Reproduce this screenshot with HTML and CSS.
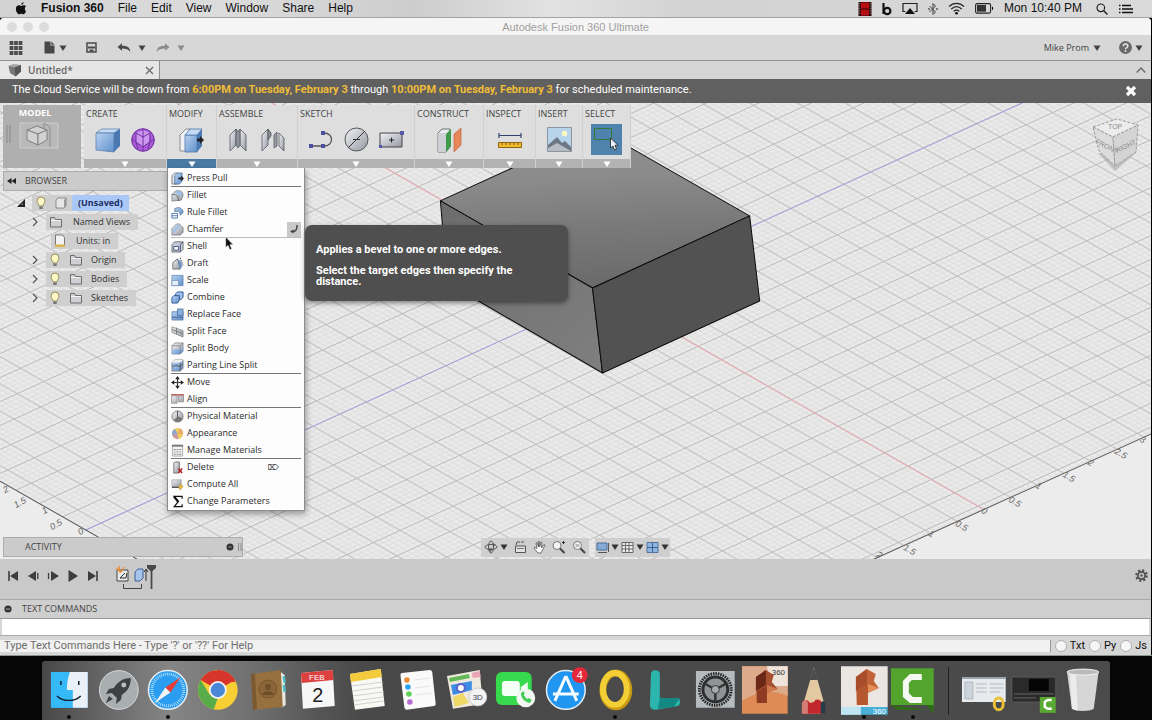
FILE: index.html
```html
<!DOCTYPE html>
<html lang="en">
<head>
<meta charset="utf-8">
<title>Autodesk Fusion 360 Ultimate</title>
<link rel="stylesheet" href="styles.css">
</head>
<body>
<svg class="defs" aria-hidden="true">
  <defs>
    <linearGradient id="blue" x1="0" y1="0" x2="1" y2="1"><stop offset="0" stop-color="#b9d3f2"/><stop offset="1" stop-color="#5f8fca"/></linearGradient>
    <linearGradient id="steel" x1="0" y1="0" x2="1" y2="1"><stop offset="0" stop-color="#f2f3f6"/><stop offset="1" stop-color="#9498a2"/></linearGradient>
    <symbol id="caret" viewBox="0 0 8 6"><path d="M0.5 0.5h7L4 6z" fill="currentColor"/></symbol>
    <symbol id="bulb" viewBox="0 0 12 14"><path d="M6 1a4 4 0 0 0-4 4c0 2 1.7 2.600 2 5h4c.3-2.400 2-3 2-5a4 4 0 0 0-4-4z" fill="#fdf8c4" stroke="#8d8656" stroke-width=".9"/><path d="M4.300 10.500h3.400v2.500H4.300z" fill="#777"/></symbol>
    <symbol id="folder" viewBox="0 0 14 12"><path d="M1.500 11V1.500h4l1 2h6V11z" fill="#cfd0d4" stroke="#6c6c6c"/><path d="M2 4.500h10" stroke="#f5f5f5"/></symbol>
    <symbol id="twig" viewBox="0 0 6 10"><path d="M1 1l4 4-4 4" fill="none" stroke="#555" stroke-width="1.200"/></symbol>
  </defs>
</svg>

<header class="menubar">
  <nav class="menubar-left">
    <button class="menubar-item" aria-label="Apple"><svg width="12" height="13" viewBox="0 0 12 13"><path d="M8.600.2c.1 1.300-1.100 2.600-2.400 2.600C6.100 1.500 7.300.3 8.600.2zM11 9.300c-.5 1.300-1.500 2.900-2.500 2.900-.8 0-1.200-.5-2.200-.5s-1.400.5-2.100.5C2.600 12.200.9 9.400.9 6.900c0-2.300 1.400-3.600 2.900-3.600 1 0 1.700.6 2.500.6.700 0 1.500-.7 2.700-.6.800 0 1.500.4 2 1-1.700 1.100-1.500 3.900 0 5z" fill="#111"/></svg></button>
    <button class="menubar-item strong">Fusion 360</button>
    <button class="menubar-item">File</button>
    <button class="menubar-item">Edit</button>
    <button class="menubar-item">View</button>
    <button class="menubar-item">Window</button>
    <button class="menubar-item">Share</button>
    <button class="menubar-item">Help</button>
  </nav>
  <div class="menubar-right">
    <svg width="14" height="14" viewBox="0 0 14 14"><path d="M.5 0h13v14H.5z" fill="#2a0606"/><path d="M3 .5h8v6H3zM3 7.500h8v6H3z" fill="#b80d14"/><path d="M1.700 1v12M12.300 1v12" stroke="#b99" stroke-width=".8" stroke-dasharray="1.200 1.200"/></svg>
    <svg width="10" height="14" viewBox="0 0 10 14"><path d="M1.500 1v11" stroke="#111" stroke-width="2.200"/><circle cx="5.200" cy="9" r="3.200" fill="none" stroke="#111" stroke-width="2.200"/></svg>
    <svg width="16" height="13" viewBox="0 0 16 13"><path d="M3.500 9.500H1v-8h14v8h-2.500" fill="none" stroke="#222" stroke-width="1.200"/><path d="M8 6l5 6H3z" fill="#111"/></svg>
    <svg width="10" height="14" viewBox="0 0 10 14"><path d="M1.500 4l6 6L5 12.500v-11L7.500 4l-6 6" fill="none" stroke="#444"/><circle cx="1" cy="7" r=".8"/><circle cx="9" cy="7" r=".8"/></svg>
    <svg width="17" height="13" viewBox="0 0 17 13"><path d="M1 4.500c4.500-4.300 10.500-4.300 15 0M3.300 7c3.200-3 7.200-3 10.400 0M5.700 9.300c1.800-1.600 3.800-1.600 5.600 0" fill="none" stroke="#222" stroke-width="1.200"/><circle cx="8.500" cy="11.300" r="1.300"/></svg>
    <svg width="19" height="11" viewBox="0 0 19 11"><rect x=".6" y=".6" width="15" height="9.500" rx="1.500" fill="none" stroke="#222" stroke-width="1.100"/><path d="M2 2h9v6.700H2z" fill="#333"/><path d="M17 3.500c1.600.6 1.600 3.200 0 3.800z"/></svg>
    <span class="clock">Mon 10:40 PM</span>
    <button class="menubar-item" aria-label="Search"><svg width="12" height="12" viewBox="0 0 12 12"><circle cx="4.800" cy="4.800" r="3.800" fill="none" stroke="#222" stroke-width="1.200"/><path d="M7.500 7.500L11.500 11.500" stroke="#222" stroke-width="1.500"/></svg></button>
    <button class="menubar-item" aria-label="Notifications"><svg width="16" height="10" viewBox="0 0 16 10"><path d="M4 1.500h9M4 5h11M4 8.500h11" stroke="#111" stroke-width="1.500"/><path d="M1 1.500h1.500M1 5h1.500M1 8.500h1.500" stroke="#111" stroke-width="1.500"/></svg></button>
  </div>
</header>

<main class="window">
  <div class="titlebar">
    <div class="lights"><span class="light"></span><span class="light"></span><span class="light"></span></div>
    <h1 class="title">Autodesk Fusion 360 Ultimate</h1>
  </div>

  <div class="quickbar">
    <div class="quick-left">
      <button class="tool" aria-label="Data panel"><svg width="14" height="14" viewBox="0 0 14 14"><path d="M2.500 0v14M7 0v14M11.500 0v14" stroke="#4d4d4d" stroke-width="3.800" stroke-dasharray="3.900 1.150"/></svg></button>
      <button class="tool file" aria-label="File"><svg width="11" height="13" viewBox="0 0 11 13"><path d="M.5.5h6v4h4v8H.5z" fill="#484848"/><path d="M7.300.5l3.200 3.200H7.300z" fill="#484848"/></svg><svg class="caret" width="8" height="6"><use href="#caret"/></svg></button>
      <button class="tool save" aria-label="Save"><svg width="11" height="11" viewBox="0 0 11 11"><path d="M1 1h9v9H1z" fill="none" stroke="#4a4a4a" stroke-width="1.500"/><path d="M2 5.500h7M3.500 8.500h4" stroke="#4a4a4a" stroke-width="2"/></svg></button>
      <button class="tool" aria-label="Undo"><svg width="14" height="10" viewBox="0 0 14 10"><path d="M.5 4L5 .3v2.400c5 0 8 1.300 8.300 6.300C11.500 6.200 9 5.500 5 5.500v2.300z" fill="#4a4a4a"/></svg><svg class="caret" width="8" height="6"><use href="#caret"/></svg></button>
      <button class="tool faded" aria-label="Redo"><svg width="14" height="10" viewBox="0 0 14 10"><path d="M13.500 4L9 .3v2.400C4 2.700 1 4 .7 9 2.500 6.200 5 5.500 9 5.500v2.300z" fill="#8b8b8b"/></svg><svg class="caret" width="8" height="6"><use href="#caret"/></svg></button>
    </div>
    <div class="quick-right">
      <button class="tool user">Mike Prom <svg width="8" height="6"><use href="#caret"/></svg></button>
      <button class="tool help" aria-label="Help"><svg width="13" height="13" viewBox="0 0 13 13"><circle cx="6.500" cy="6.500" r="6.500" fill="#6a6a6a"/><path d="M4.300 5.200c0-3 4.500-2.800 4.500-.2 0 1.700-2.200 1.500-2.200 3.200" fill="none" stroke="#e5e5e5" stroke-width="1.500"/><circle cx="6.500" cy="10" r=".9" fill="#e5e5e5"/></svg><svg width="8" height="6"><use href="#caret"/></svg></button>
    </div>
  </div>

  <div class="tabs">
    <div class="tab">
      <svg width="14" height="13" viewBox="0 0 14 13"><path d="M.5 2L5 .5 13 1v6.500L7.500 12.500 2 9z" fill="#777"/><path d="M.5 2l6 1.500 6.500-2.500L5 .5z" fill="#a5a5a5"/><path d="M6.500 3.500l1 9L13 7.500V1z" fill="#555"/></svg>
      <span class="tab-name">Untitled*</span>
      <button class="tool" aria-label="Close tab"><svg width="9" height="9" viewBox="0 0 9 9"><path d="M1 1l7 7M8 1L1 8" stroke="#6a6a6a" stroke-width="1.300"/></svg></button>
    </div>
    <button class="tool collapse" aria-label="Collapse"><svg width="10" height="6" viewBox="0 0 10 6"><path d="M.7 5.500L5 1l4.300 4.500" fill="none" stroke="#666" stroke-width="1.300"/></svg></button>
  </div>

  <div class="banner">
    <p class="banner-text">The Cloud Service will be down from <b>6:00PM on Tuesday, February 3</b> through <b>10:00PM on Tuesday, February 3</b> for scheduled maintenance.</p>
    <button class="tool" aria-label="Dismiss"><svg width="12" height="12" viewBox="0 0 12 12"><path d="M2 2l8 8M10 2l-8 8" stroke="#fff" stroke-width="3.200"/></svg></button>
  </div>

  <section class="canvas">
    <svg class="scene" viewBox="0 103 1150 456" preserveAspectRatio="xMidYMid slice" aria-hidden="true">
      <defs>
        <pattern id="minor" width="10" height="10" patternUnits="userSpaceOnUse" patternTransform="matrix(.53 -.242 .466 .266 599.5 293)"><path d="M0 5h10M5 0v10" stroke="#dcdcdc" stroke-width="1.800"/></pattern>
        <pattern id="major" width="50" height="50" patternUnits="userSpaceOnUse" patternTransform="matrix(.53 -.242 .466 .266 579.6 292.5)"><path d="M0 25h50M25 0v50" stroke="#b9b9b9" stroke-width="1.700"/></pattern>
        <linearGradient id="topface" x1=".5" y1="0" x2=".6" y2="1"><stop offset="0" stop-color="#8e8e8e"/><stop offset=".3" stop-color="#8b8b8b"/><stop offset=".6" stop-color="#7a7a7a"/><stop offset="1" stop-color="#696969"/></linearGradient>
        <linearGradient id="leftface" x1="0" y1="0" x2="1" y2="1"><stop offset="0" stop-color="#6c6c6c"/><stop offset="1" stop-color="#7f7f7f"/></linearGradient>
      </defs>
      <path d="M0 103h1150v456H0z" fill="#ececec"/>
      <path d="M0 103h1150v330L873 559H137L0 481z" fill="#eaeaea"/>
      <path d="M0 103h1150v330L873 559H137L0 481z" fill="url(#minor)"/>
      <path d="M0 103h1150v330L873 559H137L0 481z" fill="url(#major)"/>
      <path d="M85 530L1022 103" stroke="#a3a3e4"/>
      <path d="M271 103L982 509" stroke="#eeaab2"/>
      <path d="M0 481l137 78M873 559l279-126" stroke="#555"/>
      <g class="axis">
        <text transform="translate(80 535) rotate(-30)">0</text>
        <text transform="translate(52 530) rotate(-30)">0.5</text>
        <text transform="translate(44 514) rotate(-30)">1</text>
        <text transform="translate(16 508) rotate(-30)">1.5</text>
        <text transform="translate(5 493) rotate(-30)">2</text>
        <text transform="translate(875 556) rotate(30)">2</text>
        <text transform="translate(902 549) rotate(30)">1.5</text>
        <text transform="translate(927 535) rotate(30)">1</text>
        <text transform="translate(954 525) rotate(30)">0.5</text>
        <text transform="translate(980 512) rotate(30)">0</text>
        <text transform="translate(1007 501) rotate(30)">0.5</text>
        <text transform="translate(1034 487) rotate(30)">1</text>
        <text transform="translate(1061 476) rotate(30)">1.5</text>
        <text transform="translate(1086 464) rotate(30)">2</text>
        <text transform="translate(1113 453) rotate(30)">2.5</text>
        <text transform="translate(1138 441) rotate(30)">3</text>
      </g>
      <g stroke="#0c0c0c" stroke-linejoin="round">
        <path d="M440 201L597 129l152 87-157 72z" fill="url(#topface)"/>
        <path d="M440 201l152 87 10 85-155-90z" fill="url(#leftface)"/>
        <path d="M592 288l157-72 10 85-157 72z" fill="#525252"/>
      </g>
    </svg>

    <svg class="viewcube" width="52" height="56" viewBox="0 0 52 56" role="img" aria-label="View cube">
      <path d="M8 37l17 18 22-19z" fill="#a5a5a5" opacity=".6"/>
      <g stroke="#9c9c9c" stroke-dasharray="3 1.500">
        <path d="M3 11L27 3l21 6-25 12z" fill="#ececec"/>
        <path d="M3 11l20 10 2 29L9 35z" fill="#dcdcdc"/>
        <path d="M23 21L48 9l-2 27-21 14z" fill="#d4d4d4"/>
      </g>
      <text class="cube-text" transform="translate(5 27) rotate(27)">FRONT</text>
      <text class="cube-text" transform="translate(27 37) rotate(-25)">RIGHT</text>
      <text class="cube-text" transform="translate(18 13)">TOP</text>
    </svg>

    <div class="ribbon">
      <button class="workspace">
        <span class="workspace-name">MODEL</span>
        <svg width="60" height="28" viewBox="0 0 60 28"><path d="M2 4v18M5 4v18" stroke="#8a8a8a"/><path d="M15 2h38v25H15z" fill="#b9b9b9" stroke="#cdcdcd"/><path d="M39 2l6 4v20M39 2v8" stroke="#8d8d8d" fill="none"/><g fill="#d2d2d2" stroke="#808080"><path d="M22 9l10-4 10 4-9 4z"/><path d="M22 9l11 4v11l-11-5z"/><path d="M33 13l9-4v10l-9 5z"/></g></svg>
      </button>

      <section class="group g-create">
        <h2 class="group-name">CREATE</h2>
        <div class="group-icons">
          <button class="tool" aria-label="Box"><svg width="26" height="26" viewBox="0 0 26 26"><path d="M1 6l6-4 18 0-6 4z" fill="#c5dcf5" stroke="#5377a5" stroke-width=".7"/><path d="M1 6h18v19L1 23z" fill="url(#blue)" stroke="#5377a5" stroke-width=".7"/><path d="M19 6l6-4v17l-6 6z" fill="#4c78b2"/></svg></button>
          <button class="tool" aria-label="Form"><svg width="24" height="24" viewBox="0 0 24 24"><circle cx="12" cy="12" r="11.300" fill="#a95bd8" stroke="#6b2d9c"/><path d="M5 5l7-3 7 3-1 9-6 5-7-5z" fill="#cd97f0"/><path d="M5 5l7 4 7-4M12 9v14M1 11l4 3 7 5 7-5 4-3M5 5v9l2 7M19 5v9l-2 7M12 1v8" fill="none" stroke="#71319f"/></svg></button>
        </div>
        <button class="drop" aria-label="Create menu"><svg width="8" height="6"><use href="#caret"/></svg></button>
      </section>

      <section class="group g-modify">
        <h2 class="group-name">MODIFY</h2>
        <div class="group-icons">
          <button class="tool" aria-label="Press Pull"><svg width="26" height="26" viewBox="0 0 26 26"><path d="M1 8l6-6h5v22H1z" fill="#eef0f3" stroke="#777" stroke-width=".8"/><path d="M6 8h12v17H6z" fill="url(#blue)" stroke="#5279ab" stroke-width=".8"/><path d="M6 8l5-6h12l-5 6z" fill="#c4dbf5" stroke="#5279ab" stroke-width=".8"/><path d="M18 8l5-6v17l-5 6z" fill="#4e7ab4"/><path d="M18 11.500h3V9l4 4-4 4v-2.500h-3z" fill="#222"/></svg></button>
        </div>
        <button class="drop open" aria-label="Modify menu" aria-expanded="true"><svg width="8" height="6"><use href="#caret"/></svg></button>

        <div class="menu" role="menu">
          <button class="menu-item" role="menuitem"><svg viewBox="0 0 14 14"><path d="M1 4l3-3h3v12H1z" fill="#dfe3ea" stroke="#555" stroke-width=".7"/><path d="M4 4l3-3h5v9l-3 3H4z" fill="url(#blue)" stroke="#41608a" stroke-width=".7"/><path d="M8 6h3V4l3 3-3 3V8H8z" fill="#222"/></svg>Press Pull</button>
          <button class="menu-item ruled" role="menuitem"><svg viewBox="0 0 14 14"><path d="M1 13V6l4-4c5-1 8 1 8 5l-2 5z" fill="url(#steel)" stroke="#666" stroke-width=".7"/><path d="M1 6c5-1 7 2 7 7M8 8l5-3" fill="none" stroke="#555" stroke-width=".8"/><path d="M6 2c4 0 6 2 7 4L9 8C8 6 7 5 4 4z" fill="#9fbfe4"/></svg>Fillet</button>
          <button class="menu-item" role="menuitem"><svg viewBox="0 0 14 14"><path d="M4 3c5-3 9 0 9 4l-3 3c0-4-2-5-6-4z" fill="url(#blue)" stroke="#41608a" stroke-width=".7"/><path d="M1 8h6v5H1zM1 10.500h6" fill="#fff" stroke="#3b66a2" stroke-width=".9"/></svg>Rule Fillet</button>
          <button class="menu-item" role="menuitem"><svg viewBox="0 0 14 14"><path d="M1 13V6l5-5h3l4 4v5l-3 3z" fill="url(#steel)" stroke="#666" stroke-width=".7"/><path d="M1 8l6-6.500L10 3 3 11z" fill="#a6c5ea"/></svg>Chamfer<span class="repeat"><svg viewBox="0 0 10 10"><path d="M8 1c.5 5-2 7-5 6.500" fill="none" stroke="#444" stroke-width="1.500"/><path d="M4.500 5.500v4L1 7.500z" fill="#444"/></svg></span></button>
          <button class="menu-item ruled pale" role="menuitem"><svg viewBox="0 0 14 14"><path d="M1 5l3-3h9v8l-3 3H1z" fill="#c6cad8" stroke="#555" stroke-width=".8"/><path d="M3 7h5v4H3zM10 5v8M10 5l3-3" fill="#fff" stroke="#3e4d76"/></svg>Shell</button>
          <button class="menu-item" role="menuitem"><svg viewBox="0 0 14 14"><path d="M2 13V6l5-4 3 11z" fill="url(#steel)" stroke="#555" stroke-width=".8"/><path d="M7 2l4 3 1 5-2 3z" fill="#6c93c4"/><path d="M10 1l3 8" stroke="#333" stroke-dasharray="1.500 1"/></svg>Draft</button>
          <button class="menu-item" role="menuitem"><svg viewBox="0 0 14 14"><path d="M1 1.500h12v11H1z" fill="url(#blue)" stroke="#5379aa" stroke-width=".7"/><path d="M1 7h7v5.500H1z" fill="#e5effb" stroke="#6e8db5" stroke-width=".7"/></svg>Scale</button>
          <button class="menu-item" role="menuitem"><svg viewBox="0 0 14 14"><path d="M5 3l2-2h6v6l-2 2H5z" fill="#9fc0ec" stroke="#2f5795"/><path d="M1 7l2-2h6v5l-2 3H1z" fill="url(#blue)" stroke="#2f5795"/></svg>Combine</button>
          <button class="menu-item" role="menuitem"><svg viewBox="0 0 14 14"><path d="M1 4h12v9H1z" fill="url(#blue)" stroke="#4a6d9d" stroke-width=".7"/><path d="M7 1h6v7H7z" fill="#8ab0df" stroke="#3d5f8e" stroke-width=".7"/><path d="M1 10h12" stroke="#3d5f8e"/></svg>Replace Face</button>
          <button class="menu-item" role="menuitem"><svg viewBox="0 0 14 14"><path d="M1 2l12 4v7L1 8z" fill="url(#steel)" stroke="#777" stroke-width=".7"/><path d="M1 5l12 4M6 3v7" stroke="#777"/></svg>Split Face</button>
          <button class="menu-item" role="menuitem"><svg viewBox="0 0 14 14"><path d="M1 4l3-3h9v9l-3 3H1z" fill="url(#steel)" stroke="#777" stroke-width=".7"/><path d="M1 8h9l3-3v5l-3 3H1z" fill="url(#blue)"/><path d="M1 4h9v9M10 4l3-3" fill="none" stroke="#777" stroke-width=".7"/></svg>Split Body</button>
          <button class="menu-item" role="menuitem"><svg viewBox="0 0 14 14"><path d="M1 4l3-3h9v9l-3 3H1z" fill="url(#blue)" stroke="#666" stroke-width=".7"/><path d="M1 4l3-3h9l-3 3z" fill="#eee"/><path d="M1 8l4-1 5 1 3-3M10 4v9" fill="none" stroke="#555"/></svg>Parting Line Split</button>
          <button class="menu-item ruled" role="menuitem"><svg viewBox="0 0 14 14"><path d="M7 2.500v9M2.500 7h9" stroke="#222" stroke-dasharray="3.500 2"/><path d="M7 0l2.500 3.500h-5zM7 14l2.500-3.500h-5zM0 7l3.500-2.500v5zM14 7l-3.500-2.500v5zM6 6h2v2H6z" fill="#222"/></svg>Move</button>
          <button class="menu-item" role="menuitem"><svg viewBox="0 0 14 14"><path d="M0 2h14" stroke="#c14b43" stroke-width="1.500"/><path d="M.5 3h6v8h-6zM8 3h5.500v6.500H8z" fill="url(#steel)" stroke="#888" stroke-width=".8"/></svg>Align</button>
          <button class="menu-item ruled" role="menuitem"><svg viewBox="0 0 14 14"><circle cx="7" cy="7" r="6" fill="url(#steel)" stroke="#555" stroke-width=".7"/><path d="M7 1v6l5 3" stroke="#555" fill="none"/><path d="M7 7l5 3c-2 3-6 4-9 1z" fill="#777"/></svg>Physical Material</button>
          <button class="menu-item" role="menuitem"><svg viewBox="0 0 14 14"><circle cx="7" cy="7" r="6" fill="#f0cf5a"/><path d="M7 7L4 1.800A6 6 0 0 0 2 10z" fill="#8fa4d0"/><path d="M7 7l6 1A6 6 0 0 0 9 1.300z" fill="#e8ad6a"/><path d="M7 7l-5 3a6 6 0 0 0 6 3z" fill="#d195a5"/></svg>Appearance</button>
          <button class="menu-item" role="menuitem"><svg viewBox="0 0 14 14"><path d="M1.500 1h11v12h-11z" fill="#f4f4f4" stroke="#aaa"/><path d="M1 2h12" stroke="#666" stroke-width="1.500"/><path d="M3 6h8M3 11h8" stroke="#777" stroke-dasharray="2 1"/><path d="M3 8.500h8" stroke="#aaa"/></svg>Manage Materials</button>
          <button class="menu-item ruled" role="menuitem"><svg viewBox="0 0 14 14"><path d="M3 2l2-1h4v11l-2 1H3z" fill="url(#steel)" stroke="#555" stroke-width=".8"/><path d="M8 8l4 5M12 8l-4 5" stroke="#b81d24" stroke-width="1.600"/></svg>Delete<span class="key">⌦</span></button>
          <button class="menu-item" role="menuitem"><svg viewBox="0 0 14 14"><path d="M1 2h10v7H1z" fill="url(#steel)" stroke="#999" stroke-width=".7"/><path d="M1 10h8" stroke="#555" stroke-width="1.500"/><path d="M10 6l3 3-3 4-2-3z" fill="#e4b93d" stroke="#9b8d6a" stroke-width=".6"/></svg>Compute All</button>
          <button class="menu-item" role="menuitem"><svg viewBox="0 0 14 14"><path d="M12 4V1.500H3.500L8 7l-4.500 5.500H12V10" fill="none" stroke="#111" stroke-width="1.300"/><path d="M3 1.500L7.500 7" stroke="#111" stroke-width="2.200"/></svg>Change Parameters</button>

          <div class="tooltip" role="tooltip">
            <p>Applies a bevel to one or more edges.</p>
            <p>Select the target edges then specify the distance.</p>
          </div>
          <svg class="pointer" width="9" height="15" viewBox="0 0 9 15"><path d="M.6.8v10.700l2.400-2 1.800 4.300 2-.9L5 8.800h3.300z" fill="#111" stroke="#fff" stroke-width=".6"/></svg>
        </div>
      </section>

      <section class="group g-assemble">
        <h2 class="group-name">ASSEMBLE</h2>
        <div class="group-icons">
          <button class="tool" aria-label="Joint"><svg width="18" height="24" viewBox="0 0 18 24"><g stroke="#55585e" stroke-width=".8"><path d="M1 7l6-6v16l-6 6z" fill="url(#steel)"/><path d="M17 7l-6-6v16l6 6z" fill="url(#steel)"/><path d="M7 1l2 3 2-3v16l-2 3-2-3z" fill="#8e929b"/></g></svg></button>
          <button class="tool" aria-label="As-built Joint"><svg width="24" height="24" viewBox="0 0 24 24"><g stroke="#55585e" stroke-width=".8"><path d="M1 7l6-6v16l-6 6z" fill="url(#steel)"/><path d="M7 1l3 4v3L7 12z" fill="#858993"/><path d="M23 10l-5-5v13l5 5z" fill="url(#steel)"/><path d="M13 7l3-3v14l-3 2z" fill="#9a9da6"/></g></svg></button>
        </div>
        <button class="drop" aria-label="Assemble menu"><svg width="8" height="6"><use href="#caret"/></svg></button>
      </section>

      <section class="group g-sketch">
        <h2 class="group-name">SKETCH</h2>
        <div class="group-icons">
          <button class="tool" aria-label="Line"><svg width="25" height="24" viewBox="0 0 25 24"><path d="M2 18h13c10 0 10-13 0-13" fill="none" stroke="#555" stroke-width="1.300"/><path d="M0 16h4v4H0zM12 16h4v4h-4zM12 3h4v4h-4z" fill="#4d4fa0"/></svg></button>
          <button class="tool" aria-label="Circle"><svg width="25" height="25" viewBox="0 0 25 25"><circle cx="12.500" cy="12.500" r="11.500" fill="url(#steel)" stroke="#555"/><path d="M4.500 20.500l16-16M9 12.500h7" stroke="#333"/></svg></button>
          <button class="tool" aria-label="Rectangle"><svg width="25" height="24" viewBox="0 0 25 24"><path d="M1 5h22v14H1z" fill="url(#steel)" stroke="#444"/><path d="M10 12h5M12.500 9.500v5" stroke="#222"/><path d="M21 3h4v4h-4zM0 17h3v3H0z" fill="#5557a8"/></svg></button>
        </div>
        <button class="drop" aria-label="Sketch menu"><svg width="8" height="6"><use href="#caret"/></svg></button>
      </section>

      <section class="group g-construct">
        <h2 class="group-name">CONSTRUCT</h2>
        <div class="group-icons">
          <button class="tool" aria-label="Offset Plane"><svg width="26" height="26" viewBox="0 0 26 26"><path d="M2 6l4-4h8v18l-4 5H2z" fill="#e9ebee" stroke="#555" stroke-width=".8"/><path d="M2 6h8v19H2z" fill="#cdd0d5"/><path d="M10 7l5-5v17l-5 6z" fill="#3f9a4a"/><path d="M18 7l7-6v17l-7 7z" fill="#e7875a" stroke="#b95d34" stroke-width=".6"/></svg></button>
        </div>
        <button class="drop" aria-label="Construct menu"><svg width="8" height="6"><use href="#caret"/></svg></button>
      </section>

      <section class="group g-inspect">
        <h2 class="group-name">INSPECT</h2>
        <div class="group-icons">
          <button class="tool" aria-label="Measure"><svg width="24" height="24" viewBox="0 0 24 24"><path d="M1 7.500h22M1 5v5M23 5v5" stroke="#32426a" stroke-width="1.200"/><path d="M.5 14.500h23v5H.5z" fill="#f1b92c" stroke="#8d6410"/><path d="M4 15v2M8 15v2M12 15v2M16 15v2M20 15v2" stroke="#7b580f"/></svg></button>
        </div>
        <button class="drop" aria-label="Inspect menu"><svg width="8" height="6"><use href="#caret"/></svg></button>
      </section>

      <section class="group g-insert">
        <h2 class="group-name">INSERT</h2>
        <div class="group-icons">
          <button class="tool" aria-label="Insert image"><svg width="25" height="25" viewBox="0 0 25 25"><path d="M.5.500h24v24H.5z" fill="#b6d4ea" stroke="#8a97a3"/><circle cx="17.500" cy="6.500" r="2.700" fill="#fdf9c3"/><path d="M1 18l9-8 5 6 3-2 6 6v4H1z" fill="#6c7684"/><path d="M1 24v-3l9-5 14 8z" fill="#b7bcc3"/></svg></button>
        </div>
        <button class="drop" aria-label="Insert menu"><svg width="8" height="6"><use href="#caret"/></svg></button>
      </section>

      <section class="group g-select">
        <h2 class="group-name">SELECT</h2>
        <div class="group-icons">
          <button class="tool" aria-label="Select"><svg width="31" height="31" viewBox="0 0 31 31"><path d="M0 0h31v31H0z" fill="#4f83ae"/><path d="M3.500 4.500h17v11h-17z" fill="none" stroke="#2f7d3a"/><path d="M19.500 14v10l2.500-2 1.500 4 2-.8-1.500-4H27z" fill="#eef3fa" stroke="#222" stroke-width=".8"/></svg></button>
        </div>
        <button class="drop" aria-label="Select menu"><svg width="8" height="6"><use href="#caret"/></svg></button>
      </section>
    </div>

    <aside class="browser">
      <div class="panel-head">
        <svg width="9" height="6" viewBox="0 0 9 6"><path d="M4.500 0v6L0 3zM9 0v6L4.500 3z" fill="#222"/></svg>
        <h2 class="panel-name">BROWSER</h2>
      </div>
      <ul class="tree">
        <li class="node root"><svg class="twig" width="8" height="8" viewBox="0 0 8 8"><path d="M8 0v8H0z" fill="#222"/><path d="M6 4v2H4z" fill="#888"/></svg><span class="chip joined"><svg width="12" height="14"><use href="#bulb"/></svg><svg width="12" height="12" viewBox="0 0 12 12"><path d="M1 3l2-2h8v8l-2 2H1z" fill="#e6e6e6" stroke="#777" stroke-width=".8"/><path d="M9 3l2-2v8l-2 2z" fill="#999"/></svg></span><b class="root-name">(Unsaved)</b></li>
        <li class="node"><svg class="twig" width="6" height="10"><use href="#twig"/></svg><span class="chip views"><svg width="14" height="12"><use href="#folder"/></svg>Named Views</span></li>
        <li class="node"><span class="chip units"><svg width="12" height="14" viewBox="0 0 12 14"><path d="M1.500 1h7l2 2.500V12h-9z" fill="#f3f3f3" stroke="#777"/><path d="M1 10.500h10V13H1z" fill="#d8b54c"/></svg>Units: in</span></li>
        <li class="node"><svg class="twig" width="6" height="10"><use href="#twig"/></svg><span class="chip"><svg width="12" height="14"><use href="#bulb"/></svg><svg width="14" height="12"><use href="#folder"/></svg>Origin</span></li>
        <li class="node"><svg class="twig" width="6" height="10"><use href="#twig"/></svg><span class="chip"><svg width="12" height="14"><use href="#bulb"/></svg><svg width="14" height="12"><use href="#folder"/></svg>Bodies</span></li>
        <li class="node"><svg class="twig" width="6" height="10"><use href="#twig"/></svg><span class="chip"><svg width="12" height="14"><use href="#bulb"/></svg><svg width="14" height="12"><use href="#folder"/></svg>Sketches</span></li>
      </ul>
    </aside>

    <div class="canvas-foot">
      <div class="panel-head activity">
        <h2 class="panel-name">ACTIVITY</h2>
        <svg width="16" height="10" viewBox="0 0 16 10"><circle cx="4" cy="5" r="3.500" fill="#333"/><path d="M2.500 5h3" stroke="#999"/><path d="M12.500 1v8M15 1v8" stroke="#888"/></svg>
      </div>
      <div class="navbar">
        <div class="nav-part">
          <button class="tool" aria-label="Orbit"><svg width="14" height="14" viewBox="0 0 14 14"><ellipse cx="7" cy="7" rx="6" ry="2.500" fill="none" stroke="#555"/><ellipse cx="7" cy="7" rx="2.500" ry="6" fill="none" stroke="#555"/><path d="M4 9l3 3 1-4zM9 3l3 2-3 1z" fill="#555"/></svg><svg width="8" height="6"><use href="#caret"/></svg></button>
          <button class="tool" aria-label="Look At"><svg width="13" height="14" viewBox="0 0 13 14"><path d="M1.500 6h10v6.500h-10z" fill="#e2e2e2" stroke="#555"/><path d="M3 8.500h7" stroke="#777"/><path d="M2 5l1-3h3M7 2h3" stroke="#555" fill="none"/></svg></button>
          <button class="tool" aria-label="Pan"><svg width="13" height="14" viewBox="0 0 13 14"><path d="M4 12L1 8l1-1 2 1.500L3 3l1-.5L5.500 7V1.500h1.200V7L8 2l1 .3L8.500 8 11 4.500l1 .5-2.500 5L8 13H5z" fill="#fff" stroke="#555" stroke-width=".8"/></svg></button>
          <button class="tool" aria-label="Zoom"><svg width="14" height="14" viewBox="0 0 14 14"><circle cx="5" cy="5.500" r="4" fill="#f4f4f4" stroke="#777"/><path d="M8 8.500l4.500 4.500" stroke="#444" stroke-width="2"/><path d="M10 2.500h3M11.500 1v3" stroke="#333"/></svg></button>
          <button class="tool" aria-label="Fit"><svg width="14" height="14" viewBox="0 0 14 14"><circle cx="5.500" cy="5.500" r="4" fill="#f4f4f4" stroke="#777"/><path d="M3.500 4h4v3h-4z" fill="#bbb"/><path d="M8.500 8.500L13 13" stroke="#444" stroke-width="2"/></svg></button>
        </div>
        <div class="nav-part">
          <button class="tool" aria-label="Display Settings"><svg width="13" height="13" viewBox="0 0 13 13"><path d="M1 2h10v7H1z" fill="#84abd8" stroke="#4b6d96"/><path d="M12.500 2v9M2 11.500h9" stroke="#555"/></svg><svg width="8" height="6"><use href="#caret"/></svg></button>
          <button class="tool" aria-label="Grid Settings"><svg width="13" height="13" viewBox="0 0 13 13"><path d="M1 1.500h11v10H1zM1 4.500h11M1 8h11M4.500 1v11M8 1v11" fill="#eee" stroke="#666"/></svg><svg width="8" height="6"><use href="#caret"/></svg></button>
          <button class="tool" aria-label="Viewports"><svg width="13" height="13" viewBox="0 0 13 13"><path d="M1 1.500h11v10H1z" fill="#8db4e2" stroke="#55759c"/><path d="M6.500 1.500v10M1 6.500h11" stroke="#3f6190"/></svg><svg width="8" height="6"><use href="#caret"/></svg></button>
        </div>
      </div>
    </div>
  </section>

  <section class="timeline">
    <div class="playback">
      <button class="tool" aria-label="Start"><svg width="12" height="12" viewBox="0 0 12 12"><path d="M2 1v10" stroke="#3d3d3d" stroke-width="1.600"/><path d="M11 1v10L3 6z" fill="#3d3d3d"/></svg></button>
      <button class="tool" aria-label="Step back"><svg width="12" height="12" viewBox="0 0 12 12"><path d="M9 1v10L1 6z" fill="#3d3d3d"/><path d="M10.800 3v6" stroke="#3d3d3d" stroke-width="1.300"/></svg></button>
      <button class="tool" aria-label="Step forward"><svg width="12" height="12" viewBox="0 0 12 12"><path d="M4 1v10l8-5z" fill="#3d3d3d"/><path d="M1.500 3v6" stroke="#3d3d3d" stroke-width="1.300"/></svg></button>
      <button class="tool" aria-label="Play"><svg width="12" height="12" viewBox="0 0 12 12"><path d="M1.500 0v12L11 6z" fill="#3d3d3d"/></svg></button>
      <button class="tool" aria-label="End"><svg width="12" height="12" viewBox="0 0 12 12"><path d="M10 1v10" stroke="#3d3d3d" stroke-width="1.600"/><path d="M1 1v10l8-5z" fill="#3d3d3d"/></svg></button>
      <svg class="features" width="42" height="28" viewBox="0 0 42 28"><path d="M2 6h11v11H2z" fill="#e9e9e9" stroke="#444"/><path d="M5 14h6l1-5M5 14l5-5" stroke="#333" fill="none"/><path d="M1 4l5 4M4 2l1 7M9 3L6 8" stroke="#f08a2c" stroke-width="1.300"/><path d="M20 8l3-3h5v9l-3 3h-5z" fill="#a7c4ec" stroke="#3c5e97"/><path d="M31 17V6M29 8l2-3 2 3" stroke="#333" fill="none"/><path d="M32 1h9v3l-3.500 3h-2L32 4z" fill="#4a4a4a"/><path d="M36.500 4v21" stroke="#4a4a4a" stroke-width="1.800"/><path d="M8.500 20v4.500h18V20" fill="none" stroke="#444"/></svg>
    </div>
    <button class="tool" aria-label="Settings"><svg width="13" height="13" viewBox="0 0 13 13"><circle cx="6.500" cy="6.500" r="5.200" fill="none" stroke="#505050" stroke-width="2.200" stroke-dasharray="2.050 2.030"/><circle cx="6.500" cy="6.500" r="3.600" fill="none" stroke="#505050" stroke-width="1.800"/><circle cx="6.500" cy="6.500" r="1.200" fill="#505050"/></svg></button>
  </section>

  <section class="commands">
    <div class="commands-head"><svg width="8" height="8" viewBox="0 0 8 8"><circle cx="4" cy="4" r="3.600" fill="#333"/><path d="M2 4h4" stroke="#aaa"/></svg><h2 class="panel-name">TEXT COMMANDS</h2></div>
    <textarea class="output" aria-label="Command output" readonly></textarea>
    <form class="entry">
      <input class="entry-box" type="text" aria-label="Text command" placeholder="Type Text Commands Here - Type '?' or '??' For Help">
      <label class="mode"><input type="radio" name="mode">Txt</label>
      <label class="mode"><input type="radio" name="mode">Py</label>
      <label class="mode"><input type="radio" name="mode">Js</label>
    </form>
  </section>
</main>

<footer class="desktop">
  <nav class="dock">
    <button class="app running" aria-label="Finder"><svg viewBox="0 0 50 54"><path d="M7 11h37v36H7z" fill="#3aa8f0"/><path d="M7 11h19c-2 6-3 11-3 18h6v18H7z" fill="#35b9f7"/><path d="M26 11h18v36H29V29h-6c0-7 1-12 3-18z" fill="#e9f0f8"/><path d="M17 20v4M35 20v4" stroke="#123" stroke-width="1.500"/><path d="M13 35c6 6 18 6 24 0" fill="none" stroke="#123" stroke-width="1.400"/></svg></button>
    <button class="app" aria-label="Launchpad"><svg viewBox="0 0 50 54"><circle cx="25" cy="29" r="19.500" fill="#a9afb0" stroke="#d5d8d8"/><path d="M37 17c-8 0-13 4-17 10l-5 1-3 5 6-1 5 5-1 6 5-4 1-5c6-4 9-9 9-17z" fill="#3d4144"/><circle cx="30" cy="24" r="2.500" fill="#b9bdbd"/><path d="M15 35l-3 7 7-4z" fill="#3d4144"/></svg></button>
    <button class="app running" aria-label="Safari"><svg viewBox="0 0 50 54"><circle cx="25" cy="29" r="19.500" fill="#2a9df0" stroke="#e8eef3" stroke-width="1.500"/><circle cx="25" cy="29" r="16" fill="none" stroke="#bfe3fb" stroke-width="3" stroke-dasharray=".8 1.200"/><path d="M38 16L22.500 26.500l5 5z" fill="#e73c36"/><path d="M12 42l10.500-15.500 5 5z" fill="#f3f3f3"/></svg></button>
    <button class="app" aria-label="Chrome"><svg viewBox="0 0 50 54"><circle cx="25" cy="29" r="20" fill="#f7cf33"/><path d="M25 29L7.700 19a20 20 0 0 1 34.600 0z" fill="#d7352b"/><path d="M25 9a20 20 0 0 1 18 12H25z" fill="#d7352b"/><path d="M7.700 19L17 34l8 3-4 11.500A20 20 0 0 1 7.700 19z" fill="#58ac4a"/><circle cx="25" cy="29" r="9" fill="#f4f4f4"/><circle cx="25" cy="29" r="7.200" fill="#4a87d6"/></svg></button>
    <button class="app" aria-label="Contacts"><svg viewBox="0 0 50 54"><path d="M38 11l4 3 1 30-4 3z" fill="#e9e6dc"/><path d="M41 15l1 7M41 24l1 7" stroke="#4cc0c5" stroke-width="2.500"/><path d="M8 13l30-4 2 37-30 3z" fill="#96703f"/><path d="M8 13l4-.5 2 36-4 .5z" fill="#7b5930"/><circle cx="25" cy="28" r="9" fill="#8a6538" stroke="#75542c"/><circle cx="25" cy="26" r="3" fill="#6e4f29"/><path d="M19 34c1-5 11-5 12 0z" fill="#6e4f29"/></svg></button>
    <button class="app" aria-label="Calendar"><svg viewBox="0 0 50 54"><path d="M9 12l32-3 2 36-32 3z" fill="#f7f7f7"/><path d="M9 12l32-3 .7 10-32 3z" fill="#dc4140"/><text class="cal-month" x="25" y="19">FEB</text><text class="cal-day" x="26" y="41">2</text></svg></button>
    <button class="app" aria-label="Notes"><svg viewBox="0 0 50 54"><path d="M8 13l31-5 4 37-30 4z" fill="#f8f8f5"/><path d="M8 13l31-5 1 8-31 5z" fill="#f3cb3c"/><path d="M10 25l31-4M11 30l30-4M11 35l31-4M12 40l30-4M13 44l29-4" stroke="#d0d0cc"/></svg></button>
    <button class="app" aria-label="Reminders"><svg viewBox="0 0 50 54"><path d="M10 12l28-3q2 0 2.500 2L44 43q0 2-2 2l-27 4q-2 0-2.500-2L8.500 14q0-2 1.500-2z" fill="#fafafa"/><circle cx="15" cy="19" r="2.800" fill="#ee8b33"/><circle cx="16" cy="26" r="2.800" fill="#2ea4ee"/><circle cx="17" cy="33" r="2.800" fill="#5fd05a"/><circle cx="18" cy="41" r="2.800" fill="#b66ad2"/><path d="M22 19l16-2M23 27l16-2M24 34l16-2" stroke="#e3e3e3"/></svg></button>
    <button class="app" aria-label="Maps"><svg viewBox="0 0 50 54"><path d="M6 15l33-6 3 34-30 5z" fill="#eee9dc"/><path d="M8 17l20-4 1 4-20 4z" fill="#63b955"/><path d="M10 24l21-4v9l-19 5z" fill="#3d8ce4"/><path d="M31 12l8-2 1 6-8 1z" fill="#e8a4b4"/><path d="M12 36l10-4 6 10-14 4z" fill="#f0d867"/><circle cx="20" cy="27" r="4" fill="#fff" stroke="#5b62c8" stroke-width="2"/><circle cx="37" cy="36" r="9" fill="#f3f3f3" stroke="#ccc"/><text class="maps-label" x="37" y="39">3D</text></svg></button>
    <button class="app" aria-label="FaceTime"><svg viewBox="0 0 50 54"><rect x="5" y="11" width="36" height="33" rx="6" fill="#36da4c"/><rect x="11" y="20" width="18" height="15" rx="3" fill="#f5fff5"/><path d="M30 26l7-5v13l-7-5z" fill="#f5fff5"/><circle cx="35" cy="37" r="9.500" fill="#f2f6f2"/><path d="M30 33c1 5 4 8 9 9l2-3-3-2-2 1-3-4 1-2-2-2z" fill="#43cc55"/></svg></button>
    <button class="app" aria-label="App Store"><svg viewBox="0 0 50 54"><circle cx="25" cy="29" r="19.500" fill="#2196f0" stroke="#e6edf3" stroke-width="1.500"/><path d="M25 15L14 40M25 15l11 25M12 33h26" stroke="#f5fbff" stroke-width="3" fill="none"/><circle cx="39" cy="14" r="8" fill="#e5293b"/><text class="badge-text" x="39" y="18">4</text></svg></button>
    <button class="app running" aria-label="Outlook"><svg viewBox="0 0 50 54"><ellipse cx="26" cy="29" rx="13" ry="17" fill="none" stroke="#c79a12" stroke-width="7"/><ellipse cx="25" cy="28" rx="12" ry="16" fill="none" stroke="#f3cf35" stroke-width="6"/></svg></button>
    <button class="app" aria-label="Lync"><svg viewBox="0 0 50 54"><path d="M11 13c0-5 9-5 9 0v24h18c3 0 3 8 0 8l-22 4c-4 0-6-2-6-6z" fill="#2bb5ad"/><path d="M20 37h20l-6 9-16 2z" fill="#148983"/></svg></button>
    <button class="app" aria-label="System Preferences"><svg viewBox="0 0 50 54"><path d="M6 10h39v37H6z" fill="#b5babd"/><circle cx="25.500" cy="28.500" r="16" fill="none" stroke="#222" stroke-width="3" stroke-dasharray="1.500 1"/><circle cx="25.500" cy="28.500" r="12.500" fill="#8f9395" stroke="#2d2d2d" stroke-width="3"/><path d="M25.500 28.500l11-6M25.500 28.500l-11-6M25.500 28.500V41" stroke="#333" stroke-width="2.500"/><circle cx="25.500" cy="28.500" r="4" fill="#a7abad" stroke="#333"/></svg></button>
    <button class="app" aria-label="Fusion 360"><svg viewBox="0 0 50 54"><path d="M3 5h46v48H3z" fill="#de8b56"/><path d="M3 5h46v30c-16-7-30-5-46 5z" fill="#dcab8c"/><path d="M28 5h21v20H32z" fill="#efe4dc"/><path d="M17 16l10-7 8 5-2 7 6 7-11 4v10H18z" fill="#a6502f"/><path d="M17 16l10-7v15l-10 6z" fill="#6b2818"/><path d="M28 24l11 4-11 4z" fill="#d07a4d"/><path d="M18 30l10-5v17H18z" fill="#8d3b24"/><text class="app-label" x="33" y="14">360</text></svg></button>
    <button class="app" aria-label="Sketchbook"><svg viewBox="0 0 50 54"><path d="M25 6l12 42v5H13v-5z" fill="#e2c9a1"/><path d="M25 6l4 13h-8z" fill="#4b4a4d"/><path d="M13 53V42c2-4 6-4 8 0l4-1c2-4 7-3 8 1l4 1v10z" fill="#c1272d"/><path d="M32 53V42c2-3 4-2 5 2v9z" fill="#243d49"/><path d="M13 53V42c2-4 5-4 6 0v11z" fill="#d47d75"/></svg></button>
    <button class="app running" aria-label="Fusion 360"><svg viewBox="0 0 50 54"><path d="M2 5h47v41H2z" fill="#ece6e2"/><path d="M17 16l11-8 9 5-2 7 5 7-11 5v12H18z" fill="#c26338"/><path d="M17 16l11-8v16l-11 6z" fill="#a84e2a"/><path d="M29 23l11 4-11 5z" fill="#e38d57"/><path d="M18 30l11-6v20H18z" fill="#b5572f"/><path d="M2 46h47v8H2z" fill="#4aafd6"/><path d="M2 46h20v8H2z" fill="#bfe5f3"/><text class="app-label light-label" x="34" y="53">360</text></svg></button>
    <button class="app running" aria-label="Camtasia"><svg viewBox="0 0 50 54"><path d="M3 7h43v40l-4-3H3z" fill="#52a42c"/><path d="M3 44h35l8 9v-9H3l6 5h30z" fill="#2f6c17"/><path d="M34 13H22l-7 7v16l7 6h12v-6h-9l-4-4V22l3-3h10z" fill="#f4f8f0"/></svg></button>
    <span class="dock-rule"></span>
    <button class="app" aria-label="Outlook window"><svg viewBox="0 0 50 54"><path d="M3 16h44v25H3z" fill="#e8ebee"/><path d="M3 17h44" stroke="#9aa5b0" stroke-width="2"/><path d="M6 21h8v17H6zM17 23h11M17 27h11M17 31h11M31 23h14M31 27h14M31 31h10" fill="#ccd4dc" stroke="#b0b8c0"/><ellipse cx="40" cy="43" rx="4.500" ry="6" fill="none" stroke="#eac034" stroke-width="3"/></svg></button>
    <button class="app" aria-label="Camtasia window"><svg viewBox="0 0 50 54"><path d="M3 16h44v25H3z" fill="#2a2a2a" stroke="#777" stroke-width=".5"/><path d="M20 18h20v12H20z" fill="#050505"/><path d="M5 33h40M5 37h22" stroke="#666"/><path d="M31 36h16v16H31z" fill="#5ba935"/><path d="M43 39h-4l-3 2v5l3 2h4" fill="none" stroke="#fff" stroke-width="2.500"/></svg></button>
    <button class="app" aria-label="Trash"><svg viewBox="0 0 50 54"><path d="M9 10h32l-5 38c-4 3-18 3-22 0z" fill="#d6d6d6"/><path d="M12 12h6l2 38-6-2z" fill="#ececec"/><ellipse cx="25" cy="11" rx="16" ry="3" fill="#bababa" stroke="#f1f1f1"/></svg></button>
  </nav>
</footer>
</body>
</html>
```
FILE: styles.css
```css
* { box-sizing: border-box; }
html, body { height: 100%; }
body {
  margin: 0;
  display: flex;
  flex-direction: column;
  background: #000;
  color: #333;
  font: 9px/12px "Open Sans", "Noto Sans", sans-serif;
  overflow: hidden;
}
h1, h2, p, ul { margin: 0; padding: 0; }
svg { display: block; flex: none; }
button {
  border: 0;
  padding: 0;
  background: none;
  color: inherit;
  font: inherit;
}
.defs { position: absolute; width: 0; height: 0; }
.tool { display: flex; align-items: center; gap: 4px; }

/* System menu bar */
.menubar {
  display: flex;
  justify-content: space-between;
  align-items: center;
  height: 18px;
  flex: none;
  padding: 0 18px 0 15px;
  background: linear-gradient(90deg, #d2d2d2, #dcdcdc 18%, #cdcdcd 36%, #e2e2e2 48%, #d2d2d2 60%, #dadada);
  border-bottom: 1px solid #a3a3a3;
  color: #111;
  font: 12px/17px "Liberation Sans", Arial, sans-serif;
}
.menubar-left { display: flex; align-items: center; gap: 14px; }
.menubar-right { display: flex; align-items: center; gap: 10px; }
.clock { margin-right: 4px; }
.strong { font-weight: bold; }

/* Window frame */
.window {
  flex: 1;
  min-height: 0;
  display: flex;
  flex-direction: column;
  margin-right: 1px;
  background: #d6d6d6;
  border-radius: 4px 4px 0 0;
  overflow: hidden;
}
.titlebar {
  display: grid;
  grid-template-columns: 1fr auto 1fr;
  align-items: center;
  height: 17px;
  flex: none;
  background: #f5f5f5;
}
.lights { display: flex; gap: 6px; padding-left: 7px; }
.light { width: 10px; height: 10px; border-radius: 50%; background: #dcdcdc; }
.title { font: 11px/16px "Liberation Sans", Arial, sans-serif; color: #a0a0a0; }

.quickbar {
  display: flex;
  justify-content: space-between;
  align-items: center;
  height: 26px;
  flex: none;
  padding: 0 8px 0 9px;
  border-bottom: 1px solid #8f8f8f;
  background: #d7d7d7;
  color: #444;
}
.quick-left { display: flex; align-items: center; gap: 10px; }
.quick-left .tool { gap: 7px; }
.quick-left .file { margin-left: 11px; gap: 4px; }
.quick-left .save { margin: 0 10px 0 9px; }
.faded { color: #8b8b8b; }
.quick-right { display: flex; align-items: center; gap: 18px; }
.help { gap: 3px; }

.tabs {
  display: flex;
  justify-content: space-between;
  height: 18px;
  flex: none;
  padding-right: 5px;
}
.tab {
  display: flex;
  align-items: center;
  gap: 6px;
  width: 160px;
  padding: 0 5px 0 8px;
  border-right: 1px solid #8c8c8c;
  background: #e6e6e6;
}
.tab-name { flex: 1; font-size: 10px; font-weight: 600; color: #666; }

.banner {
  display: flex;
  justify-content: space-between;
  align-items: center;
  height: 24px;
  flex: none;
  padding: 0 14px 0 12px;
  background: #606060;
  color: #fff;
  font: 11px/14px Roboto, "Liberation Sans", Arial, sans-serif;
}
.banner-text { padding-bottom: 3px; }
.banner b { color: #f0bd38; }

/* Modelling area */
.canvas {
  position: relative;
  flex: 1;
  min-height: 0;
  display: flex;
  flex-direction: column;
  padding: 2px 3px;
  background: #ececec;
}
.scene { position: absolute; inset: 0; width: 100%; height: 100%; }
.axis { font: italic 9px "Liberation Sans", Arial, sans-serif; fill: #666; }
.viewcube { position: absolute; top: 13px; right: 9px; }
.cube-text { font: 7px "Liberation Sans", Arial, sans-serif; fill: #8c8c8c; }

.ribbon {
  position: relative;
  z-index: 2;
  display: flex;
  height: 63px;
  flex: none;
}
.workspace {
  display: flex;
  flex-direction: column;
  align-items: center;
  width: 78px;
  margin-right: 3px;
  padding-right: 14px;
  background: #afafaf;
}
.workspace-name { padding: 2px 0; color: #fff; font-weight: bold; }
.group {
  position: relative;
  display: flex;
  flex-direction: column;
  border-right: 1px solid #d0d0d0;
  background: #dedede;
}
.group-name { padding: 2px 2px 0; font-size: 9px; font-weight: normal; line-height: 13px; color: #444; }
.group-icons { flex: 1; display: flex; align-items: center; justify-content: center; gap: 10px; height: 39px; }
.drop { display: flex; align-items: center; justify-content: center; height: 9px; background: #b3b3b3; color: #fff; }
.drop.open { background: #4a7ba5; }
.g-create { width: 83px; }
.g-modify { width: 50px; }
.g-assemble { width: 81px; }
.g-assemble .group-icons { gap: 14px; }
.g-sketch { width: 117px; }
.g-construct { width: 69px; }
.g-inspect { width: 52px; }
.g-insert { width: 47px; }
.g-select { width: 48px; }

/* Modify menu */
.menu {
  position: absolute;
  top: 63px;
  left: 0;
  width: 138px;
  padding: 1px 3px;
  background: #fdfdfd;
  border: 1px solid #8d8d8d;
  border-top: 0;
  box-shadow: 1px 3px 6px rgba(0, 0, 0, .35);
}
.menu-item {
  display: flex;
  align-items: center;
  gap: 3px;
  width: 100%;
  height: 17px;
  border-top: 1px solid transparent;
  text-align: left;
  color: #2c2c2c;
}
.menu-item > svg { width: 13px; height: 13px; }
.menu-item.ruled { border-top-color: #777; }
.menu-item.pale { border-top-color: #bbb; }
.repeat {
  display: grid;
  place-items: center;
  width: 14px;
  height: 15px;
  margin-left: auto;
  background: #c9c9c9;
}
.repeat svg { width: 10px; height: 10px; }
.key { margin: 0 22px 0 auto; font: 8px "DejaVu Sans", sans-serif; }

.tooltip {
  position: absolute;
  top: 57px;
  left: 137px;
  display: grid;
  gap: 10px;
  width: 263px;
  padding: 19px 40px 14px 11px;
  border-radius: 7px;
  background: #4f4f4f;
  box-shadow: 0 2px 5px rgba(0, 0, 0, .45);
  color: #fff;
  font: bold 11px/11px Roboto, "Liberation Sans", Arial, sans-serif;
}
.pointer { position: absolute; top: 68px; left: 57px; }

/* Browser panel */
.browser { position: relative; width: 240px; margin-top: 3px; }
.panel-head {
  display: flex;
  align-items: center;
  height: 20px;
  border: 1px solid #acacac;
  background: #cbcbcb;
}
.panel-name { font-size: 9px; font-weight: normal; color: #444; }
.browser .panel-head { gap: 9px; padding-left: 3px; }
.tree { list-style: none; padding-top: 2px; }
.node { display: flex; align-items: center; height: 19px; padding-left: 29px; }
.node .twig { margin-right: 8px; }
.root { padding-left: 14px; }
.chip {
  display: flex;
  align-items: center;
  gap: 8px;
  height: 16px;
  padding: 0 8px 0 3px;
  background: #cfcfcf;
}
.views, .units { gap: 10px; }
.units { margin-left: 19px; }
.chip.joined { padding-right: 5px; margin-left: -1px; }
.root-name { height: 16px; padding: 2px 6px; background: #a9c8f6; color: #1d2f66; }

/* Bottom strip of the canvas */
.canvas-foot {
  position: relative;
  display: grid;
  grid-template-columns: 1fr auto 1fr;
  align-items: center;
  margin-top: auto;
}
.activity { justify-content: space-between; width: 240px; padding-left: 21px; }
.navbar { display: flex; gap: 6px; color: #333; }
.nav-part { display: flex; align-items: center; gap: 6px; height: 19px; padding: 0 3px; background: #cfcfcf; }
.nav-part + .nav-part { gap: 2px; padding: 0 1px; }
.nav-part .tool { gap: 2px; }

/* Timeline */
.timeline {
  display: flex;
  align-items: center;
  justify-content: space-between;
  height: 40px;
  flex: none;
  padding: 0 3px 7px 7px;
  background: #c9c9c9;
}
.playback { display: flex; align-items: center; gap: 8px; }
.features { margin: 5px 0 0 8px; }

/* Text commands */
.commands { flex: none; display: flex; flex-direction: column; height: 56px; }
.commands-head {
  display: flex;
  align-items: center;
  gap: 10px;
  height: 20px;
  padding-left: 4px;
  border-top: 1px solid #a8a8a8;
  border-bottom: 1px solid #999;
  background: #cfcfcf;
}
.output { height: 16px; margin: 0 2px; padding: 0; border: 0; background: #fff; resize: none; }
.entry { display: flex; align-items: center; flex: 1; gap: 4px; padding-right: 4px; border-top: 1px solid #aaa; color: #111; font: 11px/14px Roboto, "Liberation Sans", Arial, sans-serif; }
.entry-box {
  flex: 1;
  height: 12px;
  padding: 0 4px;
  border: 0;
  border-right: 1px solid #999;
  background: #f1f1f1;
  font: inherit;
  line-height: 12px;
}
.entry-box::placeholder { color: #6d6d6d; opacity: 1; }
.mode { display: flex; align-items: center; gap: 3px; }
.mode input {
  appearance: none;
  width: 12px;
  height: 12px;
  margin: 0;
  border: 1px solid #b0b0b0;
  border-radius: 50%;
  background: #f6f6f6;
}

/* Dock */
.desktop { flex: none; padding: 5px 42px 0; background: #060606; border-top: 1px solid #8d9490; }
.dock {
  display: flex;
  height: 59px;
  padding: 0 2px;
  border-radius: 3px 3px 0 0;
  background: linear-gradient(90deg, #484848, #777 9%, #858585 12%, #6f6f6f 20%, #555 26%, #494949 30%, #4b4b4b);
}
.app { position: relative; flex: 1; min-width: 0; }
.app svg { width: 100%; height: 54px; margin-bottom: 5px; }
.running::after {
  content: "";
  position: absolute;
  bottom: 1px;
  left: 50%;
  width: 4px;
  height: 4px;
  margin-left: -2px;
  border-radius: 50%;
  background: #0a0a0a;
}
.dock-rule { flex: 0 0 21px; background: linear-gradient(#222, #222) center / 1px 48px no-repeat; }
.cal-month { font: 8px "Liberation Sans", Arial, sans-serif; fill: #fff; text-anchor: middle; }
.cal-day { font: 20px "Liberation Sans", Arial, sans-serif; fill: #222; text-anchor: middle; }
.maps-label { font: 8px "Liberation Sans", Arial, sans-serif; fill: #345; text-anchor: middle; }
.badge-text { font: 11px "Liberation Sans", Arial, sans-serif; fill: #fff; text-anchor: middle; }
.app-label { font: 8px "Liberation Sans", Arial, sans-serif; fill: #333; }
.light-label { fill: #fff; }
```
